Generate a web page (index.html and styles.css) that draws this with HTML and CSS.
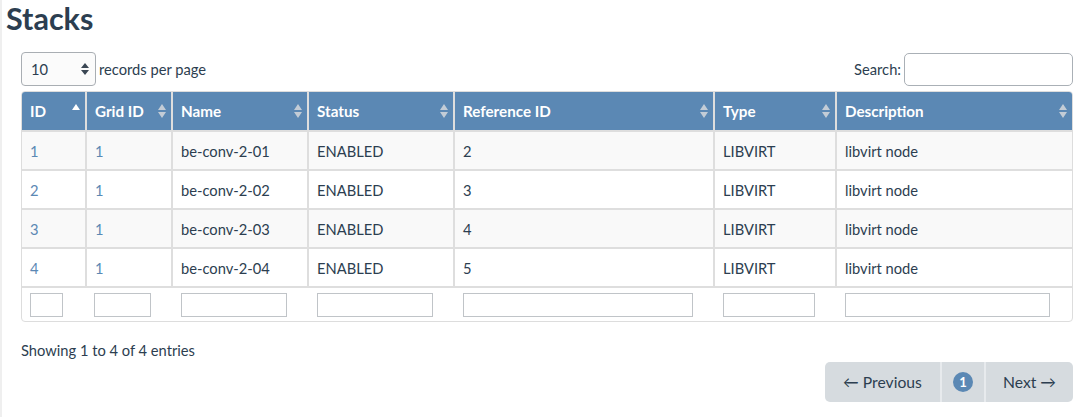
FILE: index.html
```html
<!DOCTYPE html>
<html>
<head>
<meta charset="utf-8">
<title>Stacks</title>
<link rel="stylesheet" href="styles.css">
</head>
<body>
<div class="page">
  <h1 class="title">Stacks</h1>
  <div class="content">
    <div class="controls">
      <label class="length">
        <span class="select">10
          <svg class="select-arrows" width="8" height="12" viewBox="0 0 8 12"><path d="M4 0 L8 5 L0 5 Z M0 7 L8 7 L4 12 Z" fill="#3b4754"/></svg>
        </span>
        records per page
      </label>
      <label class="search">Search:<input class="search-input" type="text"></label>
    </div>
    <div class="table-wrap">
      <table class="grid">
        <thead>
          <tr>
            <th class="c-id"><span class="th-in">ID<svg class="sort" width="8" height="14" viewBox="0 0 8 14"><path d="M4 0 L8 6 L0 6 Z" fill="#ffffff"/></svg></span></th>
            <th class="c-grid"><span class="th-in">Grid ID<svg class="sort" width="8" height="14" viewBox="0 0 8 14"><path d="M4 0 L8 6 L0 6 Z M0 8 L8 8 L4 14 Z" fill="#c3ccd6"/></svg></span></th>
            <th class="c-name"><span class="th-in">Name<svg class="sort" width="8" height="14" viewBox="0 0 8 14"><path d="M4 0 L8 6 L0 6 Z M0 8 L8 8 L4 14 Z" fill="#c3ccd6"/></svg></span></th>
            <th class="c-status"><span class="th-in">Status<svg class="sort" width="8" height="14" viewBox="0 0 8 14"><path d="M4 0 L8 6 L0 6 Z M0 8 L8 8 L4 14 Z" fill="#c3ccd6"/></svg></span></th>
            <th class="c-ref"><span class="th-in">Reference ID<svg class="sort" width="8" height="14" viewBox="0 0 8 14"><path d="M4 0 L8 6 L0 6 Z M0 8 L8 8 L4 14 Z" fill="#c3ccd6"/></svg></span></th>
            <th class="c-type"><span class="th-in">Type<svg class="sort" width="8" height="14" viewBox="0 0 8 14"><path d="M4 0 L8 6 L0 6 Z M0 8 L8 8 L4 14 Z" fill="#c3ccd6"/></svg></span></th>
            <th class="c-desc"><span class="th-in">Description<svg class="sort" width="8" height="14" viewBox="0 0 8 14"><path d="M4 0 L8 6 L0 6 Z M0 8 L8 8 L4 14 Z" fill="#c3ccd6"/></svg></span></th>
          </tr>
        </thead>
        <tbody>
          <tr class="odd"><td><a href="#">1</a></td><td><a href="#">1</a></td><td>be-conv-2-01</td><td>ENABLED</td><td>2</td><td>LIBVIRT</td><td>libvirt node</td></tr>
          <tr><td><a href="#">2</a></td><td><a href="#">1</a></td><td>be-conv-2-02</td><td>ENABLED</td><td>3</td><td>LIBVIRT</td><td>libvirt node</td></tr>
          <tr class="odd"><td><a href="#">3</a></td><td><a href="#">1</a></td><td>be-conv-2-03</td><td>ENABLED</td><td>4</td><td>LIBVIRT</td><td>libvirt node</td></tr>
          <tr><td><a href="#">4</a></td><td><a href="#">1</a></td><td>be-conv-2-04</td><td>ENABLED</td><td>5</td><td>LIBVIRT</td><td>libvirt node</td></tr>
        </tbody>
        <tfoot>
          <tr class="filters">
            <td><input class="filter" type="text"></td>
            <td><input class="filter" type="text"></td>
            <td><input class="filter" type="text"></td>
            <td><input class="filter" type="text"></td>
            <td><input class="filter" type="text"></td>
            <td><input class="filter" type="text"></td>
            <td><input class="filter" type="text"></td>
          </tr>
        </tfoot>
      </table>
    </div>
    <div class="info">Showing 1 to 4 of 4 entries</div>
    <div class="pager-row">
      <div class="pager">
        <a class="pg pg-prev" href="#">&larr; Previous</a>
        <a class="pg pg-num" href="#"><span class="pg-dot">1</span></a>
        <a class="pg pg-next" href="#">Next &rarr;</a>
      </div>
    </div>
  </div>
</div>
</body>
</html>
```

FILE: styles.css
```css
html, body {
  margin: 0;
  padding: 0;
  background: #ffffff;
}
body {
  font-family: Lato, "Open Sans", sans-serif;
  color: #2c3e50;
  font-size: 14.7px;
}
.page {
  border-left: 2px solid #efefef;
  min-height: 417px;
  box-sizing: border-box;
}
.title {
  margin: 0 0 0 4px;
  font-size: 30.5px;
  line-height: 36px;
  font-weight: 700;
  color: #2c3e50;
}
.content {
  padding: 16px 11px 0 19px;
}
.controls {
  display: flex;
  justify-content: space-between;
  align-items: center;
  height: 34px;
}
.length {
  display: flex;
  align-items: center;
  gap: 3px;
}
.select {
  box-sizing: border-box;
  width: 75px;
  height: 34px;
  border: 1px solid #a9aeb3;
  border-radius: 4px;
  background: #fbfbfb;
  display: flex;
  align-items: center;
  justify-content: space-between;
  padding: 0 6px 0 9px;
}
.search {
  display: flex;
  align-items: center;
  gap: 3px;
}
.search-input {
  box-sizing: border-box;
  width: 169px;
  height: 33px;
  border: 1px solid #aab0b6;
  border-radius: 5px;
  margin: 1px 0 0 0;
  padding: 0 8px;
  outline: none;
}
.table-wrap {
  margin-top: 5px;
  border: 1px solid #dddddd;
  border-radius: 4px;
  overflow: hidden;
}
.grid {
  width: 100%;
  border-collapse: separate;
  border-spacing: 0;
  table-layout: fixed;
  font-size: 14.7px;
}
.grid th, .grid td {
  box-sizing: border-box;
  padding: 0 0 0 8px;
  text-align: left;
  border-right: 2px solid #dedede;
  border-bottom: 2px solid #dedede;
  white-space: nowrap;
}
.grid th:last-child, .grid td:last-child {
  border-right: none;
}
.grid th {
  background: #5b88b4;
  color: #ffffff;
  font-weight: 700;
  font-size: 15.2px;
  height: 40px;
  padding-right: 5px;
}
.th-in {
  display: flex;
  align-items: center;
  justify-content: space-between;
}
.sort {
  display: block;
}
.c-id { width: 65px; }
.c-grid { width: 86px; }
.c-name { width: 136px; }
.c-status { width: 146px; }
.c-ref { width: 260px; }
.c-type { width: 122px; }
.c-desc { width: 235px; }
.grid tbody td {
  height: 39px;
  background: #ffffff;
  color: #2c3e50;
}
.grid tbody tr.odd td {
  background: #f9f9f9;
}
.grid a {
  color: #5b88b4;
  text-decoration: none;
}
.grid tfoot td {
  border-right: none;
  border-bottom: none;
  height: 33px;
  padding: 5px 22px 4px 8px;
  vertical-align: top;
}
.grid tfoot td:first-child {
  padding-right: 24px;
}
.grid tfoot td:nth-child(2) {
  padding-left: 7px;
}
.filter {
  display: block;
  box-sizing: border-box;
  width: 100%;
  height: 24px;
  margin: 0;
  border: 1px solid #c0c4c8;
  border-radius: 0;
  background: #ffffff;
  outline: none;
}
.info {
  margin-top: 18px;
  line-height: 20px;
}
.pager-row {
  display: flex;
  justify-content: flex-end;
  margin-top: 2px;
}
.pager {
  display: flex;
  height: 40px;
  border-radius: 5px;
  overflow: hidden;
  background: #d6dbdf;
}
.pg {
  display: flex;
  align-items: center;
  justify-content: center;
  color: #2c3e50;
  text-decoration: none;
  font-size: 15.7px;
  box-sizing: border-box;
}
.pg-prev {
  width: 115px;
}
.pg-num {
  width: 46px;
  border-left: 2px solid #e7eaed;
  border-right: 2px solid #e7eaed;
}
.pg-next {
  width: 87px;
}
.pg-dot {
  width: 20px;
  height: 20px;
  border-radius: 50%;
  background: #5b88b4;
  color: #ffffff;
  font-weight: 700;
  font-size: 13px;
  display: flex;
  align-items: center;
  justify-content: center;
}
```
